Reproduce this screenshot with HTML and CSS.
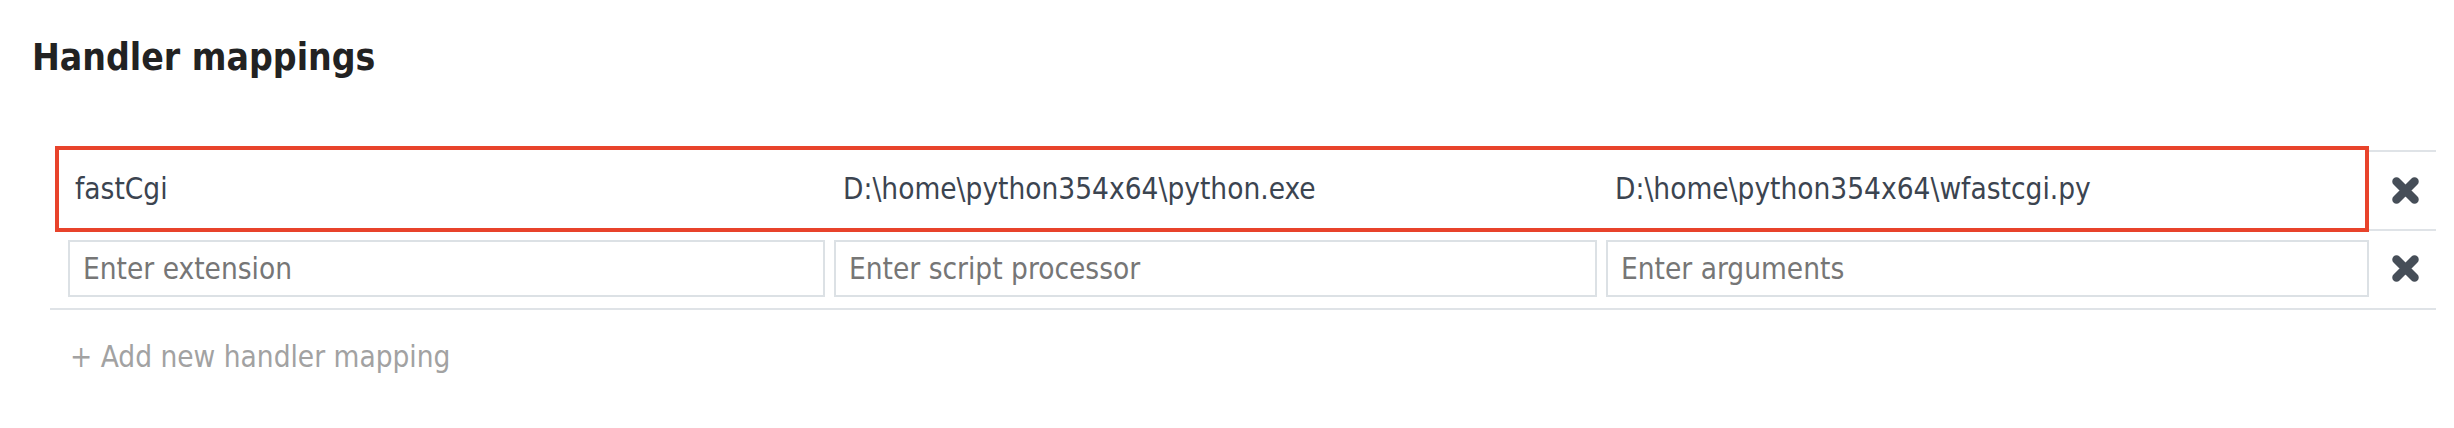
FILE: index.html
```html
<!DOCTYPE html>
<html lang="en">
<head>
<meta charset="utf-8">
<title>Handler mappings</title>
<link rel="stylesheet" href="styles.css">
</head>
<body>
<main class="page">
  <h2 class="title">Handler mappings</h2>
  <div class="table">
    <div class="row row-existing">
      <div class="cells selected">
        <span class="cell">fastCgi</span>
        <span class="cell">D:\home\python354x64\python.exe</span>
        <span class="cell">D:\home\python354x64\wfastcgi.py</span>
      </div>
      <div class="action action-existing">
        <button class="remove" aria-label="Remove">
          <svg width="27" height="27" viewBox="0 0 27 27"><path d="M4.5 4.5 L22.5 22.5 M22.5 4.5 L4.5 22.5" stroke="#464e58" stroke-width="8.5" stroke-linecap="round" fill="none"/></svg>
        </button>
      </div>
    </div>
    <div class="row row-new">
      <div class="cells inputs">
        <input class="field" type="text" placeholder="Enter extension">
        <input class="field" type="text" placeholder="Enter script processor">
        <input class="field" type="text" placeholder="Enter arguments">
      </div>
      <div class="action action-new">
        <button class="remove" aria-label="Remove">
          <svg width="27" height="27" viewBox="0 0 27 27"><path d="M4.5 4.5 L22.5 22.5 M22.5 4.5 L4.5 22.5" stroke="#464e58" stroke-width="8.5" stroke-linecap="round" fill="none"/></svg>
        </button>
      </div>
    </div>
  </div>
  <a class="add" href="#">+ Add new handler mapping</a>
</main>
</body>
</html>
```
FILE: styles.css
```css
html, body {
  margin: 0;
  padding: 0;
  background: #ffffff;
}

body {
  font-family: "DejaVu Sans Condensed", "DejaVu Sans", "Liberation Sans", sans-serif;
  font-stretch: condensed;
  font-size: 29.5px;
  color: #3b4450;
}

.page {
  display: flex;
  flex-direction: column;
  align-items: flex-start;
}

.title {
  margin: 37px 0 0 32px;
  font-size: 37px;
  line-height: 42px;
  font-weight: bold;
  color: #222222;
}

.table {
  margin: 67px 0 0 50px;
  width: 2386px;
  display: flex;
  flex-direction: column;
}

.row {
  display: flex;
  align-items: stretch;
}

.cells.selected {
  box-sizing: border-box;
  margin-left: 5px;
  width: 2314px;
  height: 86px;
  border: 4px solid #e8432b;
  padding-left: 16px;
  display: grid;
  grid-template-columns: 768px 772px 1fr;
  align-items: center;
}

.cell {
  white-space: nowrap;
  line-height: 34px;
}

.action {
  width: 67px;
  box-sizing: border-box;
  padding-left: 5px;
  display: flex;
  align-items: center;
  justify-content: center;
}

.action-existing {
  margin-top: 4px;
  height: 81px;
  border-top: 2px solid #dfe3e7;
  border-bottom: 2px solid #dfe3e7;
}

.remove {
  border: 0;
  background: none;
  padding: 0;
  margin: 0;
  display: flex;
  cursor: pointer;
}

.row-new {
  padding: 8px 0 11px 0;
  border-bottom: 2px solid #dfe3e7;
}

.cells.inputs {
  margin-left: 18px;
  width: 2301px;
  display: grid;
  grid-template-columns: 757px 763px 763px;
  column-gap: 9px;
}

.field {
  box-sizing: border-box;
  height: 57px;
  width: 100%;
  margin: 0;
  border: 2px solid #dce1e5;
  border-radius: 0;
  padding: 0 0 0 13px;
  font: inherit;
  color: #3b4450;
  background: #ffffff;
  outline: none;
}

.field::placeholder {
  color: #767676;
  opacity: 1;
}

.add {
  margin: 29px 0 0 70px;
  line-height: 36px;
  color: #a2a2a2;
  text-decoration: none;
}
```
